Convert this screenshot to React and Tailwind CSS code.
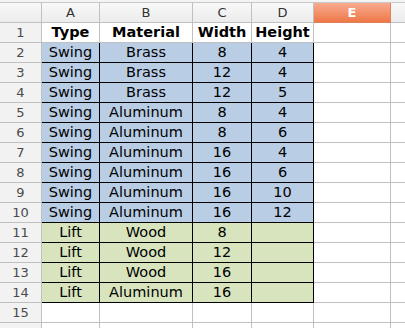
const cols = [
  { key: 'A', w: 'w-[58px]' },
  { key: 'B', w: 'w-[93px]' },
  { key: 'C', w: 'w-[59px]' },
  { key: 'D', w: 'w-[62px]' },
  { key: 'E', w: 'w-[77px]' },
];

const rows = [
  ['Type', 'Material', 'Width', 'Height'],
  ['Swing', 'Brass', '8', '4'],
  ['Swing', 'Brass', '12', '4'],
  ['Swing', 'Brass', '12', '5'],
  ['Swing', 'Aluminum', '8', '4'],
  ['Swing', 'Aluminum', '8', '6'],
  ['Swing', 'Aluminum', '16', '4'],
  ['Swing', 'Aluminum', '16', '6'],
  ['Swing', 'Aluminum', '16', '10'],
  ['Swing', 'Aluminum', '16', '12'],
  ['Lift', 'Wood', '8', ''],
  ['Lift', 'Wood', '12', ''],
  ['Lift', 'Wood', '16', ''],
  ['Lift', 'Aluminum', '16', ''],
  [],
];

function cellClass(r, c) {
  // r is 1-based row number, c is 0-based column index
  if (c < 4 && r >= 2 && r <= 10) return 'bg-[#b9cde5] border-black';
  if (c < 4 && r >= 11 && r <= 14) return 'bg-[#d7e4bd] border-black';
  return 'bg-white border-[#c0c0c0]';
}

export default function App() {
  return (
    <div
      className="w-[405px] h-[328px] overflow-hidden bg-white text-black"
      style={{ fontFamily: '"DejaVu Sans", sans-serif' }}
    >
      {/* top strip */}
      <div className="h-[3px] bg-[#f4f4f4] border-b border-[#c8c8c8]" />

      {/* column headers */}
      <div className="flex h-[20px]">
        <div className="w-[42px] shrink-0 border-r border-b border-[#c0c0c0] bg-gradient-to-b from-[#f8f8f8] to-[#ececec]" />
        {cols.map((col) =>
          col.key === 'E' ? (
            <div
              key={col.key}
              className={`${col.w} shrink-0 flex items-center justify-center border-r border-b border-[#e0805a] bg-gradient-to-b from-[#f6ab8e] to-[#ef7747] text-white font-bold text-[13px]`}
            >
              {col.key}
            </div>
          ) : (
            <div
              key={col.key}
              className={`${col.w} shrink-0 flex items-center justify-center border-r border-b border-[#c0c0c0] bg-gradient-to-b from-[#f8f8f8] to-[#ececec] text-[#333] text-[13px]`}
            >
              {col.key}
            </div>
          )
        )}
        <div className="flex-1 border-b border-[#c0c0c0] bg-gradient-to-b from-[#f8f8f8] to-[#ececec]" />
      </div>

      {/* data rows */}
      {rows.map((row, i) => {
        const r = i + 1;
        return (
          <div key={r} className="flex h-[20px]">
            <div className="w-[42px] shrink-0 flex items-center justify-center border-r border-b border-[#c0c0c0] bg-[#f2f2f2] text-[#4a4a4a] text-[13px]">
              {r}
            </div>
            {cols.map((col, c) => (
              <div
                key={col.key}
                className={`${col.w} shrink-0 flex items-center justify-center border-r border-b ${cellClass(r, c)} ${
                  r === 1 ? 'font-bold' : ''
                } text-[14.5px] leading-none`}
              >
                {row[c] || ''}
              </div>
            ))}
            <div className="flex-1 border-b border-[#c0c0c0] bg-white" />
          </div>
        );
      })}

      {/* partly visible row 16 */}
      <div className="flex h-[20px]">
        <div className="w-[42px] shrink-0 border-r border-[#c0c0c0] bg-[#f2f2f2]" />
        {cols.map((col) => (
          <div key={col.key} className={`${col.w} shrink-0 border-r border-[#c0c0c0]`} />
        ))}
      </div>
    </div>
  );
}
